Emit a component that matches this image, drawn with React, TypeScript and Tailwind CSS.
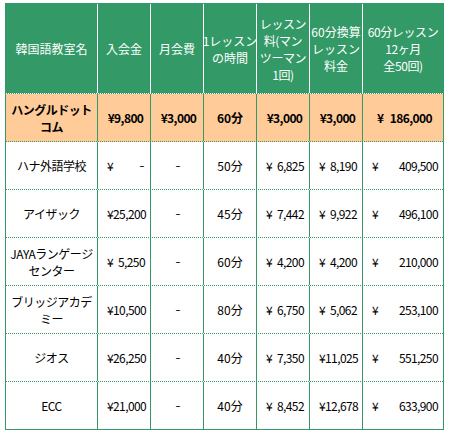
import React from "react";

type Money = { v: string };

const Dash = () => <span className="inline-block scale-x-[0.45]">－</span>;

const headers: React.ReactNode[] = [
  <>韓国語教室名</>,
  <>入会金</>,
  <>月会費</>,
  <>1レッスン<br />の時間</>,
  <>レッスン<br />料(マン<br />ツーマン<br />1回)</>,
  <>60分換算<br />レッスン<br />料金</>,
  <>60分レッスン<br />12ヶ月<br />全50回)</>,
];

const widths = ["w-[91px]", "w-[53px]", "w-[53px]", "w-[53px]", "w-[53px]", "w-[53px]", "w-[81px]"];

type Row = {
  name: React.ReactNode;
  nyu: Money;
  time: string;
  fee: Money;
  conv: Money;
  year: Money;
};

const rows: Row[] = [
  { name: <>ハナ外語学校</>, nyu: { v: "－" }, time: "50分", fee: { v: "6,825" }, conv: { v: "8,190" }, year: { v: "409,500" } },
  { name: <>アイザック</>, nyu: { v: "25,200" }, time: "45分", fee: { v: "7,442" }, conv: { v: "9,922" }, year: { v: "496,100" } },
  { name: <>JAYAランゲージ<br />センター</>, nyu: { v: "5,250" }, time: "60分", fee: { v: "4,200" }, conv: { v: "4,200" }, year: { v: "210,000" } },
  { name: <>ブリッジアカデ<br />ミー</>, nyu: { v: "10,500" }, time: "80分", fee: { v: "6,750" }, conv: { v: "5,062" }, year: { v: "253,100" } },
  { name: <>ジオス</>, nyu: { v: "26,250" }, time: "40分", fee: { v: "7,350" }, conv: { v: "11,025" }, year: { v: "551,250" } },
  { name: <>ECC</>, nyu: { v: "21,000" }, time: "40分", fee: { v: "8,452" }, conv: { v: "12,678" }, year: { v: "633,900" } },
];

function MoneyCell({ m, w }: { m: Money; w: string }) {
  return (
    <div
      className={`${w} shrink-0 flex items-center justify-between pl-[9px] pr-[5px] tracking-[-0.6px] border-l border-[#339966]`}
    >
      <span>¥</span>
      {m.v === "－" ? <span className="mr-[-2px]"><Dash /></span> : <span>{m.v}</span>}
    </div>
  );
}

export default function App() {
  return (
    <div
      className="w-[450px] h-[432px] bg-white pt-[3px] pl-[5px]"
      style={{ fontFamily: '"Noto Sans CJK JP", "Noto Sans", sans-serif' }}
    >
      <div className="w-[439px] border border-[#339966] text-[12px] leading-[17px] text-black">
        {/* header */}
        <div className="flex h-[90px] bg-[#339966] text-white border-b border-dotted border-white">
          {headers.map((h, i) => (
            <div
              key={i}
              className={`${widths[i]} shrink-0 flex items-center justify-center text-center whitespace-nowrap ${i > 0 ? "border-l border-white" : ""} ${i === 4 || i === 6 ? "tracking-[-0.4px]" : ""}`}
            >
              <div>{h}</div>
            </div>
          ))}
        </div>
        {/* highlight row */}
        <div className="flex h-[48px] bg-[#ffcc99] font-bold border-b border-dotted border-[#339966]">
          <div className={`${widths[0]} shrink-0 flex items-center justify-center text-center whitespace-nowrap tracking-[-0.5px]`}>
            <div>ハングルドット<br />コム</div>
          </div>
          <div className={`${widths[1]} shrink-0 flex items-center justify-center pl-[3px] tracking-[-0.6px] border-l border-[#339966]`}>¥9,800</div>
          <div className={`${widths[2]} shrink-0 flex items-center justify-center pl-[3px] tracking-[-0.6px] border-l border-[#339966]`}>¥3,000</div>
          <div className={`${widths[3]} shrink-0 flex items-center justify-center border-l border-[#339966]`}>60分</div>
          <div className={`${widths[4]} shrink-0 flex items-center justify-center pl-[3px] tracking-[-0.6px] border-l border-[#339966]`}>¥3,000</div>
          <div className={`${widths[5]} shrink-0 flex items-center justify-center pl-[3px] tracking-[-0.6px] border-l border-[#339966]`}>¥3,000</div>
          <div className={`${widths[6]} shrink-0 flex items-center justify-center pl-[3px] tracking-[-0.6px] border-l border-[#339966] whitespace-pre`}>¥   186,000</div>
        </div>
        {rows.map((r, idx) => (
          <div
            key={idx}
            className={`flex ${idx === rows.length - 1 ? "h-[47px]" : "h-[48px] border-b border-dotted border-[#339966]"}`}
          >
            <div className={`${widths[0]} shrink-0 flex items-center justify-center text-center whitespace-nowrap tracking-[-0.5px]`}>
              <div>{r.name}</div>
            </div>
            <MoneyCell m={r.nyu} w={widths[1]} />
            <div className={`${widths[2]} shrink-0 flex items-center justify-center pl-[2px] border-l border-[#339966]`}><Dash /></div>
            <div className={`${widths[3]} shrink-0 flex items-center justify-center border-l border-[#339966]`}>{r.time}</div>
            <MoneyCell m={r.fee} w={widths[4]} />
            <MoneyCell m={r.conv} w={widths[5]} />
            <MoneyCell m={r.year} w={widths[6]} />
          </div>
        ))}
      </div>
    </div>
  );
}
